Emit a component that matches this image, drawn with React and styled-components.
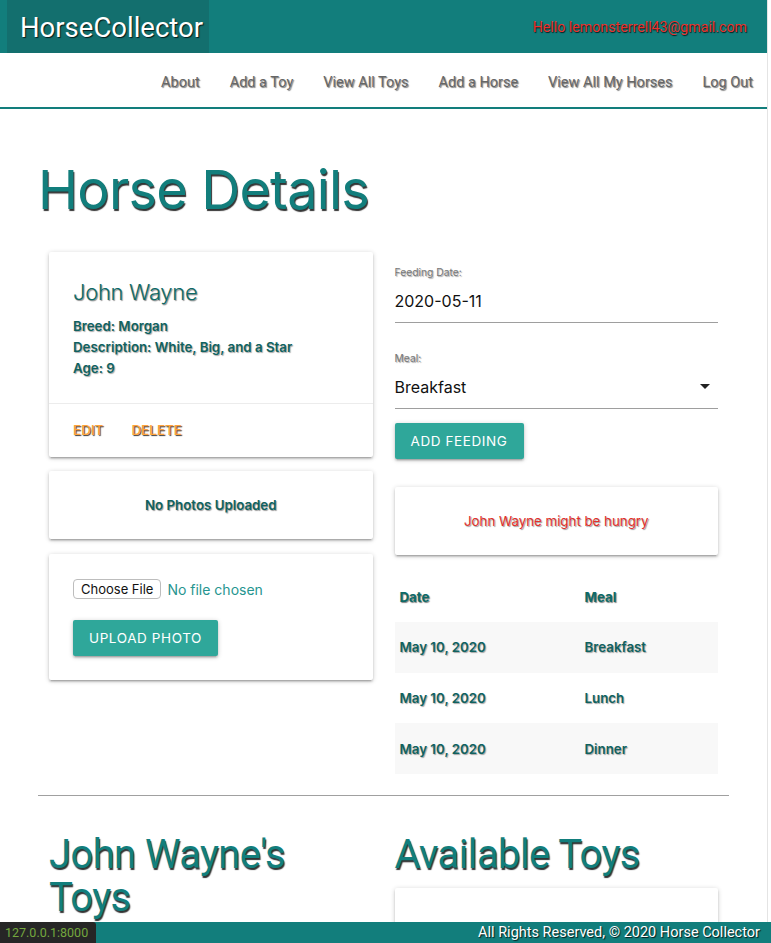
import React from "react";
import styled, { createGlobalStyle } from "styled-components";

const GlobalStyle = createGlobalStyle`
  html, body { margin: 0; padding: 0; background: #fff; }
  body {
    font-family: Roboto, "Liberation Sans", Arial, sans-serif;
    font-size: 14.5px;
    color: #0f6663;
  }
  * { box-sizing: border-box; }
`;

const TEAL = "#127e7c";
const SHADOW = "1px 1px 1px rgba(0,0,0,0.75)";

const Page = styled.div`
  width: 768px;
  min-height: 943px;
  padding-bottom: 40px;
  border-right: 1px solid #e4e4e4;
`;

const TopBar = styled.header`
  height: 53px;
  background: ${TEAL};
  display: flex;
  align-items: center;
  justify-content: space-between;
  padding: 0 20px 0 7px;
`;

const Brand = styled.div`
  height: 53px;
  background: #136f6e;
  display: flex;
  align-items: center;
  padding: 2px 0 0 13px;
  width: 202px;
  color: #fff;
  font-family: Roboto, sans-serif;
  font-size: 27.5px;
  text-shadow: ${SHADOW};
`;

const Greeting = styled.div`
  color: #e8312c;
  font-family: Roboto, sans-serif;
  font-size: 14.2px;
  padding-top: 1px;
  text-shadow: 1px 1px 1px rgba(0,0,0,0.8);
`;

const NavBar = styled.nav`
  height: 56px;
  background: #fff;
  border-bottom: 2px solid ${TEAL};
  display: flex;
  align-items: center;
  justify-content: flex-end;
  gap: 30px;
  padding: 5px 14px 0 0;
`;

const NavLink = styled.a`
  color: #666;
  font-family: Roboto, sans-serif;
  font-size: 14.5px;
  text-decoration: none;
  text-shadow: 1px 1px 1px rgba(0,0,0,0.5);
`;

const Container = styled.main`
  width: 691px;
  margin: 0 0 0 38px;
`;

const PageTitle = styled.h1`
  margin: 0;
  padding: 50px 0 0 0;
  height: 143px;
  font-family: Inter, "Liberation Sans", sans-serif;
  font-weight: 400;
  font-size: 54px;
  line-height: 62px;
  color: ${TEAL};
  letter-spacing: -0.8px;
  text-shadow: 1px 2px 1px rgba(0,0,0,0.8);
`;

const Row = styled.div`
  display: grid;
  grid-template-columns: 1fr 1fr;
`;

const Col = styled.div`
  padding: 0 11px;
  display: flex;
  flex-direction: column;
`;

const Card = styled.div`
  background: #fff;
  border-radius: 2px;
  box-shadow: 0 2px 2px 0 rgba(0,0,0,.14), 0 3px 1px -2px rgba(0,0,0,.12), 0 1px 5px 0 rgba(0,0,0,.2);
  margin-bottom: ${(p) => p.$mb || 14}px;
`;

const CardContent = styled.div`
  padding: 24px;
  text-align: ${(p) => (p.$center ? "center" : "left")};
`;

const CardTitle = styled.div`
  font-family: Inter, sans-serif;
  font-weight: 300;
  font-size: 22px;
  line-height: 32px;
  color: #0e6a67;
  margin-bottom: 8px;
  letter-spacing: -0.3px;
  text-shadow: 1px 1px 1px rgba(0,0,0,0.45);
`;

const InfoLine = styled.p`
  margin: 0;
  font-family: Inter, sans-serif;
  font-weight: 600;
  font-size: 13.3px;
  line-height: 21px;
  color: #10625f;
  text-shadow: 1px 1px 1px rgba(0,0,0,0.35);
`;

const CardAction = styled.div`
  border-top: 1px solid rgba(160,160,160,0.2);
  padding: 16px 24px;
  display: flex;
  gap: 28px;
`;

const ActionLink = styled.a`
  font-family: Inter, sans-serif;
  font-weight: 500;
  font-size: 13.5px;
  line-height: 21px;
  color: #ffa33a;
  text-transform: uppercase;
  text-shadow: 1px 1px 1px rgba(0,0,0,0.8);
`;

const Notice = styled.div`
  font-family: Inter, sans-serif;
  font-weight: ${(p) => (p.$red ? 400 : 600)};
  font-size: 13.3px;
  line-height: 20px;
  color: ${(p) => (p.$red ? "#e3302b" : "#10625f")};
  text-shadow: 1px 1px 1px rgba(0,0,0,0.4);
`;

const FileRow = styled.div`
  display: flex;
  align-items: center;
  gap: 6px;
  height: 22px;
  margin-bottom: 20px;
`;

const FileButton = styled.span`
  display: inline-flex;
  align-items: center;
  height: 20px;
  padding: 0 7px;
  border: 1px solid #bdbdbd;
  border-radius: 4px;
  background: #fff;
  color: #111;
  font-family: Inter, "Liberation Sans", sans-serif;
  font-size: 13px;
`;

const FileText = styled.span`
  color: #26958f;
  font-family: Inter, sans-serif;
  font-size: 14px;
`;

const Button = styled.button`
  height: 36px;
  padding: 0 16px;
  border: none;
  border-radius: 2px;
  background: #2fa79a;
  color: #fff;
  font-family: Inter, sans-serif;
  font-size: 13.5px;
  letter-spacing: 0.6px;
  text-transform: uppercase;
  box-shadow: 0 2px 2px 0 rgba(0,0,0,.14), 0 3px 1px -2px rgba(0,0,0,.12), 0 1px 5px 0 rgba(0,0,0,.2);
  align-self: flex-start;
  display: inline-flex;
  align-items: center;
  margin-top: ${(p) => p.$mt || 0}px;
  margin-bottom: ${(p) => p.$mb || 0}px;
`;

const Field = styled.div`
  display: flex;
  flex-direction: column;
  margin-top: ${(p) => p.$mt}px;
`;

const FieldLabel = styled.label`
  font-family: Inter, sans-serif;
  font-size: 10.3px;
  line-height: 14px;
  color: #777;
  text-shadow: 1px 1px 1px rgba(0,0,0,0.35);
`;

const FieldValue = styled.div`
  height: 44px;
  display: flex;
  align-items: center;
  justify-content: space-between;
  border-bottom: 1px solid #9e9e9e;
  font-family: Inter, sans-serif;
  font-size: 16px;
  color: #111;
`;

const Caret = styled.span`
  width: 0;
  height: 0;
  border-left: 5px solid transparent;
  border-right: 5px solid transparent;
  border-top: 5px solid #222;
  margin-right: 8px;
`;

const Table = styled.table`
  width: 100%;
  border-collapse: collapse;
`;

const Th = styled.th`
  text-align: left;
  height: 51px;
  padding: 0 5px;
  font-family: Inter, sans-serif;
  font-weight: 700;
  font-size: 13.3px;
  color: #0e6a67;
  text-shadow: 1px 1px 1px rgba(0,0,0,0.5);
  width: ${(p) => p.$w || "auto"};
`;

const Tr = styled.tr`
  background: ${(p) => (p.$striped ? "#f8f8f8" : "#fff")};
`;

const Td = styled.td`
  height: 50.7px;
  padding: 0 5px;
  font-family: Inter, sans-serif;
  font-weight: 600;
  font-size: 13.3px;
  color: #10625f;
  text-shadow: 1px 1px 1px rgba(0,0,0,0.35);
`;

const Divider = styled.hr`
  border: none;
  border-top: 1px solid #a0a0a0;
  margin: 21px 0 0 0;
`;

const SubTitle = styled.h3`
  margin: 37px 0 0 0;
  font-family: Roboto, sans-serif;
  font-weight: 400;
  font-size: 40px;
  line-height: 43px;
  letter-spacing: -0.6px;
  color: ${TEAL};
  text-shadow: 1px 2px 1px rgba(0,0,0,0.8);
`;

const ToyCard = styled(Card)`
  height: 80px;
  margin-top: 12px;
`;

const Footer = styled.footer`
  position: fixed;
  left: 0;
  right: 0;
  bottom: 0;
  height: 21px;
  background: ${TEAL};
  display: flex;
  align-items: center;
  justify-content: flex-end;
  padding-right: 11px;
  color: #fff;
  font-family: Roboto, sans-serif;
  font-size: 14.5px;
  text-shadow: 1px 1px 1px rgba(0,0,0,0.8);
`;

const StatusBubble = styled.div`
  position: fixed;
  left: 0;
  bottom: 0;
  height: 21px;
  width: 96px;
  background: #262626;
  border-top-right-radius: 3px;
  display: flex;
  align-items: center;
  padding-left: 5px;
  color: #74a83e;
  font-family: Roboto, sans-serif;
  font-size: 12.5px;
`;

const feedings = [
  { date: "May 10, 2020", meal: "Breakfast" },
  { date: "May 10, 2020", meal: "Lunch" },
  { date: "May 10, 2020", meal: "Dinner" },
];

const navItems = ["About", "Add a Toy", "View All Toys", "Add a Horse", "View All My Horses", "Log Out"];

export default function App() {
  return (
    <>
      <GlobalStyle />
      <Page>
        <TopBar>
          <Brand>HorseCollector</Brand>
          <Greeting>Hello lemonsterrell43@gmail.com</Greeting>
        </TopBar>
        <NavBar>
          {navItems.map((n) => (
            <NavLink key={n}>{n}</NavLink>
          ))}
        </NavBar>
        <Container>
          <PageTitle>Horse Details</PageTitle>
          <Row>
            <Col>
              <Card>
                <CardContent>
                  <CardTitle>John Wayne</CardTitle>
                  <InfoLine>Breed: Morgan</InfoLine>
                  <InfoLine>Description: White, Big, and a Star</InfoLine>
                  <InfoLine>Age: 9</InfoLine>
                </CardContent>
                <CardAction>
                  <ActionLink>Edit</ActionLink>
                  <ActionLink>Delete</ActionLink>
                </CardAction>
              </Card>
              <Card $mb={15}>
                <CardContent $center>
                  <Notice>No Photos Uploaded</Notice>
                </CardContent>
              </Card>
              <Card>
                <CardContent>
                  <FileRow>
                    <FileButton>Choose File</FileButton>
                    <FileText>No file chosen</FileText>
                  </FileRow>
                  <Button>Upload Photo</Button>
                </CardContent>
              </Card>
            </Col>
            <Col>
              <Field $mt={13}>
                <FieldLabel>Feeding Date:</FieldLabel>
                <FieldValue>2020-05-11</FieldValue>
              </Field>
              <Field $mt={28}>
                <FieldLabel>Meal:</FieldLabel>
                <FieldValue>
                  Breakfast
                  <Caret />
                </FieldValue>
              </Field>
              <Button $mt={14} $mb={28}>Add Feeding</Button>
              <Card $mb={16}>
                <CardContent $center>
                  <Notice $red>John Wayne might be hungry</Notice>
                </CardContent>
              </Card>
              <Table>
                <thead>
                  <tr>
                    <Th $w="185px">Date</Th>
                    <Th>Meal</Th>
                  </tr>
                </thead>
                <tbody>
                  {feedings.map((f, i) => (
                    <Tr key={f.meal} $striped={i % 2 === 0}>
                      <Td>{f.date}</Td>
                      <Td>{f.meal}</Td>
                    </Tr>
                  ))}
                </tbody>
              </Table>
            </Col>
          </Row>
          <Divider />
          <Row>
            <Col>
              <SubTitle>John Wayne's Toys</SubTitle>
            </Col>
            <Col>
              <SubTitle>Available Toys</SubTitle>
              <ToyCard />
            </Col>
          </Row>
        </Container>
      </Page>
      <Footer>All Rights Reserved, © 2020 Horse Collector</Footer>
      <StatusBubble>127.0.0.1:8000</StatusBubble>
    </>
  );
}
